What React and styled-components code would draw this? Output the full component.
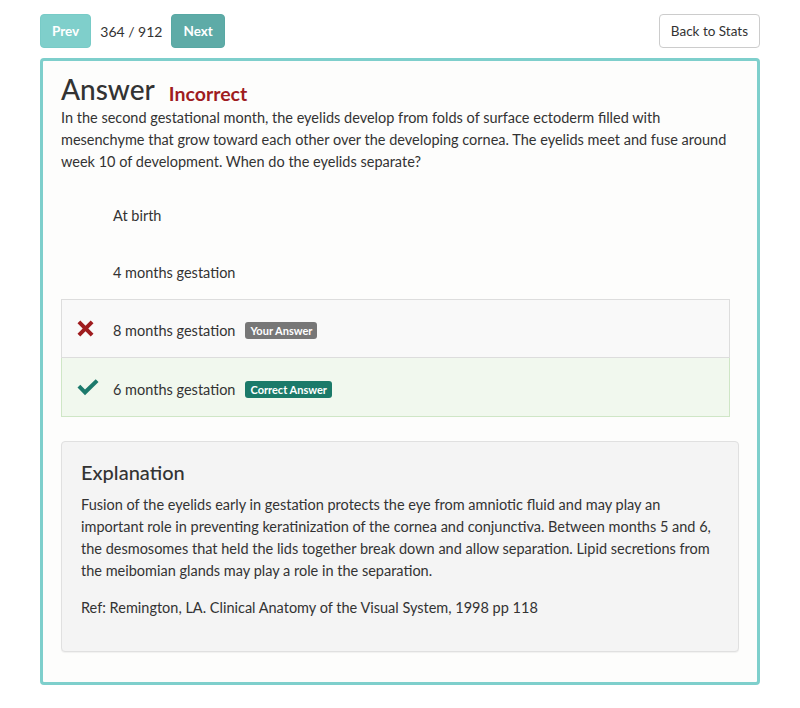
import styled, { createGlobalStyle } from "styled-components";

const GlobalStyle = createGlobalStyle`
  body {
    margin: 0;
    background: #ffffff;
    font-family: "Lato", "Open Sans", sans-serif;
    color: #333333;
  }
`;

const options = [
  { text: "At birth" },
  { text: "4 months gestation" },
  { text: "8 months gestation", state: "wrong", badge: "Your Answer" },
  { text: "6 months gestation", state: "right", badge: "Correct Answer" },
];

function CrossIcon() {
  return (
    <svg width="17" height="17" viewBox="0 0 17 17">
      <path
        d="M0.5 3.3 3.3 0.5 8.5 5.7l5.2-5.2 2.8 2.8-5.2 5.2 5.2 5.2-2.8 2.8-5.2-5.2-5.2 5.2-2.8-2.8 5.2-5.2z"
        fill="#9f1c1f"
      />
    </svg>
  );
}

function CheckIcon() {
  return (
    <svg width="22" height="17" viewBox="0 0 22 17">
      <path
        d="M0.5 8.5 3.3 5.7l4.7 4.7L18.7 0.2l2.8 2.8L8 16.3z"
        fill="#1c7a6c"
      />
    </svg>
  );
}

export default function App() {
  return (
    <>
      <GlobalStyle />
      <Page>
        <TopBar>
          <Pager>
            <NavButton $faded>Prev</NavButton>
            <Count>364 / 912</Count>
            <NavButton>Next</NavButton>
          </Pager>
          <BackButton>Back to Stats</BackButton>
        </TopBar>
        <Card>
          <TitleRow>
            <Title>Answer</Title>
            <Verdict>Incorrect</Verdict>
          </TitleRow>
          <Question>
            In the second gestational month, the eyelids develop from folds of
            surface ectoderm filled with mesenchyme that grow toward each other
            over the developing cornea. The eyelids meet and fuse around week 10
            of development. When do the eyelids separate?
          </Question>
          <OptionList>
            {options.map((o, i) => (
              <Option key={i} $state={o.state}>
                <IconSlot $state={o.state}>
                  {o.state === "wrong" && <CrossIcon />}
                  {o.state === "right" && <CheckIcon />}
                </IconSlot>
                <OptionText>{o.text}</OptionText>
                {o.badge && <Badge $state={o.state}>{o.badge}</Badge>}
              </Option>
            ))}
          </OptionList>
          <Explanation>
            <ExplanationTitle>Explanation</ExplanationTitle>
            <ExplanationText>
              Fusion of the eyelids early in gestation protects the eye from
              amniotic fluid and may play an important role in preventing
              keratinization of the cornea and conjunctiva. Between months 5 and
              6, the desmosomes that held the lids together break down and allow
              separation. Lipid secretions from the meibomian glands may play a
              role in the separation.
            </ExplanationText>
            <ExplanationText>
              Ref: Remington, LA. Clinical Anatomy of the Visual System, 1998 pp
              118
            </ExplanationText>
          </Explanation>
        </Card>
      </Page>
    </>
  );
}

const Page = styled.div`
  width: 720px;
  padding: 14px 40px 24px;
`;

const TopBar = styled.div`
  display: flex;
  justify-content: space-between;
  align-items: center;
  height: 34px;
`;

const Pager = styled.div`
  display: flex;
  align-items: center;
`;

const NavButton = styled.button`
  height: 34px;
  padding: 0 11px;
  border: 1px solid ${(p) => (p.$faded ? "#78cbc7" : "#58a8a4")};
  border-radius: 4px;
  background: ${(p) => (p.$faded ? "#7fcfcb" : "#5eaba7")};
  color: #ffffff;
  font-family: inherit;
  font-size: 13.5px;
  font-weight: 700;
`;

const Count = styled.span`
  margin: 0 9px;
  font-size: 14px;
  color: #333333;
`;

const BackButton = styled.button`
  height: 34px;
  padding: 0 11px;
  border: 1px solid #cccccc;
  border-radius: 4px;
  background: #ffffff;
  color: #333333;
  font-family: inherit;
  font-size: 13.5px;
`;

const Card = styled.div`
  margin-top: 10px;
  border: 3px solid #7ecfcc;
  border-radius: 4px;
  background: #fdfdfc;
  padding: 10px 18px 30px;
`;

const TitleRow = styled.div`
  display: flex;
  align-items: flex-end;
`;

const Title = styled.h1`
  margin: 0;
  font-size: 28px;
  font-weight: 500;
  line-height: 36px;
  color: #333333;
`;

const Verdict = styled.span`
  margin-left: 14px;
  margin-bottom: -2px;
  font-size: 19.5px;
  font-weight: 700;
  color: #9f1c1f;
  line-height: 30px;
`;

const Question = styled.p`
  margin: 0;
  font-size: 14.5px;
  line-height: 22px;
  color: #333333;
`;

const OptionList = styled.div`
  margin-top: 12px;
  width: 669px;
  display: flex;
  flex-direction: column;
`;

const Option = styled.div`
  display: flex;
  align-items: center;
  box-sizing: border-box;
  padding: 4px 0 0 15px;
  border: 1px solid
    ${(p) =>
      p.$state === "right"
        ? "#cfe6c6"
        : p.$state === "wrong"
        ? "#dddddd"
        : "transparent"};
  border-top: ${(p) => (p.$state === "right" ? "none" : undefined)};
  background: ${(p) =>
    p.$state === "right"
      ? "#f1f8ee"
      : p.$state === "wrong"
      ? "#f9f9f9"
      : "transparent"};
  height: ${(p) => (p.$state ? "59px" : "57px")};
`;

const IconSlot = styled.div`
  width: 36px;
  display: flex;
  align-items: center;
  margin-top: ${(p) => (p.$state ? "-4px" : "0")};
`;

const OptionText = styled.span`
  font-size: 14.5px;
  color: #333333;
`;

const Badge = styled.span`
  margin-left: 10px;
  padding: 2px 5px;
  border-radius: 3px;
  font-size: 11px;
  font-weight: 700;
  color: #ffffff;
  background: ${(p) => (p.$state === "right" ? "#1b7a69" : "#777777")};
`;

const Explanation = styled.div`
  margin-top: 24px;
  width: 678px;
  box-sizing: border-box;
  padding: 15px 19px 32px;
  background: #f4f4f4;
  border: 1px solid #e0e0e0;
  border-radius: 4px;
  box-shadow: 0 1px 1px rgba(0, 0, 0, 0.05);
`;

const ExplanationTitle = styled.h2`
  margin: 0 0 7px;
  font-size: 20px;
  font-weight: 500;
  line-height: 30px;
  color: #333333;
`;

const ExplanationText = styled.p`
  margin: 0 0 15px;
  font-size: 14.5px;
  line-height: 22px;
  color: #333333;
  &:last-child {
    margin-bottom: 0;
  }
`;
